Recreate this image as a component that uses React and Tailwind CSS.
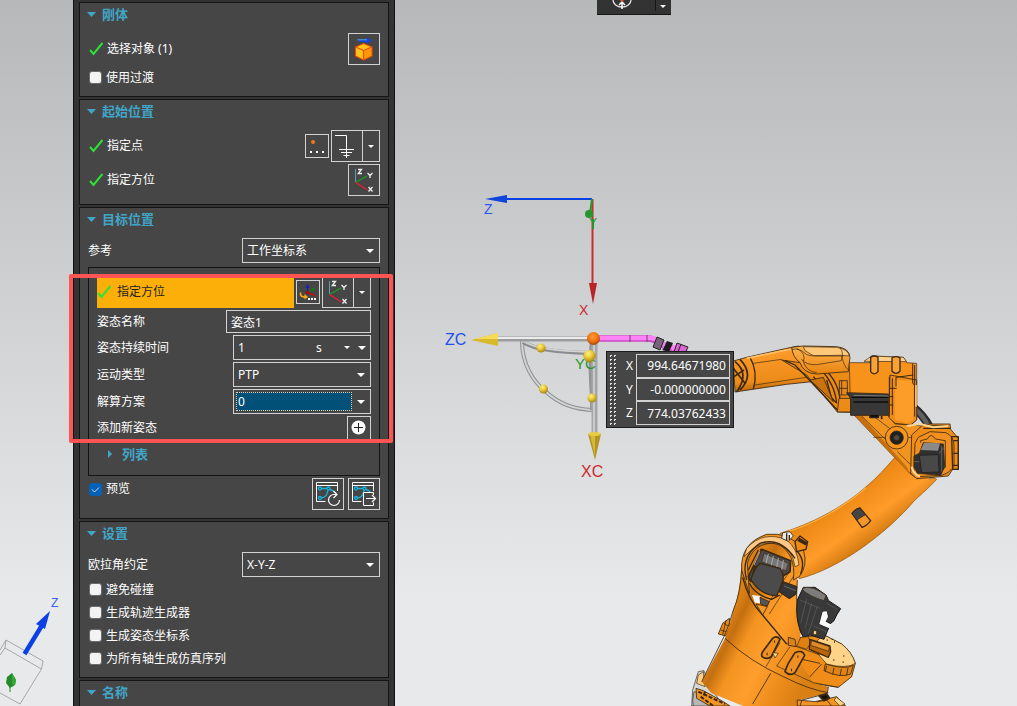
import { useState } from 'react'
import { clsx } from 'clsx'

function Caret({ className }) {
  return (
    <svg viewBox="0 0 8 4" className={clsx('pointer-events-none h-1 w-2 shrink-0', className)} aria-hidden="true">
      <path d="M0 0H8L4 4Z" fill="#fff" />
    </svg>
  )
}

function CheckMark() {
  return (
    <svg viewBox="0 0 14 14" className="h-3.5 w-3.5 shrink-0" aria-hidden="true">
      <path d="M1 8 4.500 12 13.500 1" fill="none" stroke="#2ee236" strokeWidth="2" />
    </svg>
  )
}

function IconButton({ label, size = 'size-8', children }) {
  return (
    <button type="button" aria-label={label} className={clsx('shrink-0 border border-[#d2d2d2] hover:bg-[#555]', size)}>
      {children}
    </button>
  )
}

function SplitButton({ label, children }) {
  return (
    <div className="flex h-8 shrink-0 border border-[#d2d2d2]">
      <button type="button" aria-label={label} className="w-[30px]">{children}</button>
      <button type="button" aria-label={`${label} 选项`} className="flex w-[17px] items-center justify-center border-l border-[#d2d2d2]">
        <svg viewBox="0 0 6 3" className="h-[3px] w-1.5" aria-hidden="true"><path d="M0 0H6L3 3Z" fill="#fff" /></svg>
      </button>
    </div>
  )
}

function BodyIcon() {
  return (
    <svg viewBox="1 1 30 30" className="size-[30px]">
      <path d="M9.500 6.500H18.500V4.500L24 7.500 18.500 10.500V9H12Z" fill="#1546dc" />
      <path d="M9.500 6.800H19" stroke="#4fa5f0" strokeWidth="1" />
      <path d="M15.500 10.500 24 14V23L15.500 27 7.500 23V14Z" fill="#ffc414" />
      <path d="M15.500 17.500 24 14V23L15.500 27Z" fill="#ff9808" />
      <path d="M15.500 10.500 24 14V23L15.500 27 7.500 23V14ZM7.500 14 15.500 17.500 24 14M15.500 17.500V27" fill="none" stroke="#f04a0c" strokeWidth="1.100" />
    </svg>
  )
}

function PointIcon() {
  return (
    <svg viewBox="1 1 22 22" className="size-[22px]">
      <circle cx="8" cy="8" r="2" fill="#f07a18" />
      <path d="M5 17h2v2H5zM11 17h2v2h-2zM17 17h2v2h-2z" fill="#fff" />
    </svg>
  )
}

function GroundIcon() {
  return (
    <svg viewBox="1 1 30 30" className="size-[30px]">
      <path d="M4 5.500H15.500V28M8 19.500H23M10 22.500H21M12.500 25.500H18.500" fill="none" stroke="#fff" />
    </svg>
  )
}

function CsysIcon() {
  return (
    <svg viewBox="1 1 30 30" className="size-[30px]">
      <path d="M7.500 5V18" stroke="#5c9db8" />
      <path d="M7.500 18.500 19 12" stroke="#16a01c" strokeWidth="1.300" />
      <path d="M7.500 18.500 19.500 26" stroke="#e8202c" strokeWidth="1.300" />
      <g fill="none" stroke="#eee" strokeWidth="1.300">
        <path d="M10 5.500H13.500L10.300 9.500H14" />
        <path d="M19.500 9 22 11.500 24.500 9M22 11.500V14" />
        <path d="M20.500 23 24.500 27.500M24.500 23 20.500 27.500" />
      </g>
    </svg>
  )
}

function OrientIcon() {
  return (
    <svg viewBox="1 1 22 22" className="size-[22px]">
      <path d="M11.500 12V6" stroke="#1226b8" strokeWidth="1.200" />
      <path d="M9.500 8 11.500 4 13.500 8Z" fill="#1226b8" />
      <path d="M11.500 12 17 9.500" stroke="#0e7a1c" strokeWidth="1.200" />
      <path d="M15.500 8 20 8.500 17 11.500Z" fill="#0e7a1c" />
      <path d="M11.500 12.500 19 15.500" stroke="#c01010" strokeWidth="1.500" />
      <circle cx="11.500" cy="12.500" r="1.800" fill="#a80c0c" />
      <path d="M4.500 12.500C4 16 6 17 9 17" fill="none" stroke="#ffac14" strokeWidth="1.600" />
      <path d="M8.500 14 12 17 8.500 19.500Z" fill="#ffac14" />
      <path d="M12 18h2v2h-2zM15 18h2v2h-2zM18 18h2v2h-2z" fill="#fff" />
    </svg>
  )
}

function PathWindow() {
  return (
    <>
      <path d="M13.500 23.500H4.500V4.500H25.500V13M4.500 7.500H25.500" fill="none" stroke="#fff" />
      <g fill="none" stroke="#18b4e0" strokeWidth="1.300">
        <path d="M9.500 10.500H15M18 11.500C21 12 22 13.500 23 15M16 12C15.500 17 13 19.500 9.500 20" />
        <circle cx="8" cy="10.500" r="1.500" />
        <circle cx="16.500" cy="10.500" r="1.500" />
        <circle cx="8" cy="20" r="1.500" />
      </g>
    </>
  )
}

function ReplayIcon() {
  return (
    <svg viewBox="1 1 30 30" className="size-[30px]">
      <PathWindow />
      <path d="M25 16.500H22A5.500 5.500 0 1 0 27.500 22M21.500 13 25 16.500 21.500 20" fill="none" stroke="#fff" strokeWidth="1.200" />
    </svg>
  )
}

function ExportIcon() {
  return (
    <svg viewBox="1 1 30 30" className="size-[30px]">
      <PathWindow />
      <path d="M25.500 17V14.500H15.500V27.500H25.500V24.500" fill="#464646" stroke="#fff" />
      <path d="M18 20.500H27.500M24 17 27.500 20.500 24 24" fill="none" stroke="#fff" strokeWidth="1.200" />
    </svg>
  )
}

function Section({ title, children }) {
  return (
    <section className="border border-[#141414] bg-[#464646] px-2">
      <h2>
        <button type="button" aria-expanded="true" className="-ml-px flex h-[22px] items-center gap-1.5 text-[13px] font-bold text-[#41a5c8]">
          <svg viewBox="0 0 9 5" className="h-[5px] w-[9px]" aria-hidden="true"><path d="M0 0H9L4.500 5Z" fill="#41a5c8" /></svg>
          {title}
        </button>
      </h2>
      {children}
    </section>
  )
}

function Tick({ label, defaultChecked = false, className }) {
  const [checked, setChecked] = useState(defaultChecked)
  return (
    <label className={clsx('flex items-center gap-1 pl-0.5', className)}>
      <span className="-ml-px grid size-[13px] shrink-0">
        <input
          type="checkbox"
          checked={checked}
          onChange={(e) => setChecked(e.target.checked)}
          className="col-start-1 row-start-1 size-[13px] appearance-none rounded-[3px] border border-[#6b6b6b] bg-[#f3f3f3] checked:border-[#0560b8] checked:bg-[#0560b8]"
        />
        {checked && (
          <svg viewBox="0 0 13 13" className="pointer-events-none col-start-1 row-start-1 size-[13px]" aria-hidden="true">
            <path d="M3 6.500 5.500 9 10 4.500" fill="none" stroke="#cfe4f8" />
          </svg>
        )}
      </span>
      {label}
    </label>
  )
}

function SelectField({ id, value, options = [value] }) {
  return (
    <div className="grid h-[25px] w-[138px] shrink-0 items-center border border-[#d2d2d2]">
      <select id={id} defaultValue={value} className="col-start-1 row-start-1 h-full w-full appearance-none bg-transparent pl-1 outline-none">
        {options.map((o) => <option key={o} className="bg-[#464646]">{o}</option>)}
      </select>
      <Caret className="col-start-1 row-start-1 mr-[5px] justify-self-end" />
    </div>
  )
}

function Row({ label, htmlFor, children }) {
  return (
    <div className="flex items-center justify-between">
      <label htmlFor={htmlFor}>{label}</label>
      {children}
    </div>
  )
}

function Done({ children }) {
  return (
    <span className="flex items-center gap-1 pl-px">
      <CheckMark />
      {children}
    </span>
  )
}

function PoseBox() {
  return (
    <div className="mt-1 border border-[#141414] px-2 pt-2 pb-[7px]">
      <div className="flex flex-col gap-0.5">
        <div className="flex items-center">
          <span className="mr-0.5 flex h-8 flex-1 items-center gap-1.5 bg-[#fcaf08] text-[#222]">
            <CheckMark />
            指定方位
          </span>
          <IconButton label="坐标系对话框" size="size-6"><OrientIcon /></IconButton>
          <div className="ml-0.5"><SplitButton label="坐标系"><CsysIcon /></SplitButton></div>
        </div>
        <Row label="姿态名称" htmlFor="pose-name">
          <input id="pose-name" defaultValue="姿态1" className="h-[23px] w-[145px] border border-[#d2d2d2] px-1 outline-none" />
        </Row>
        <Row label="姿态持续时间" htmlFor="pose-time">
          <div className="flex h-[25px] w-[138px] items-center border border-[#d2d2d2]">
            <input id="pose-time" defaultValue="1" className="w-0 flex-1 px-1 outline-none" />
            <select aria-label="单位" className="w-6 appearance-none bg-transparent outline-none">
              <option className="bg-[#464646]">s</option>
            </select>
            <svg viewBox="0 0 6 3" className="ml-1 h-[3px] w-1.5" aria-hidden="true"><path d="M0 0H6L3 3Z" fill="#fff" /></svg>
            <button type="button" aria-label="持续时间选项" className="ml-2 pr-1"><Caret /></button>
          </div>
        </Row>
        <Row label="运动类型" htmlFor="motion-type">
          <SelectField id="motion-type" value="PTP" options={['PTP', 'LIN']} />
        </Row>
        <Row label="解算方案" htmlFor="solution">
          <div className="flex h-[25px] w-[138px] items-center border border-[#d2d2d2] pl-0.5">
            <input id="solution" defaultValue="0" className="h-[19px] w-0 flex-1 border border-dotted border-[#f0c8a0] bg-[#005078] px-px outline-none" />
            <button type="button" aria-label="解算方案选项" className="px-[5px]"><Caret /></button>
          </div>
        </Row>
        <div className="flex items-center justify-between">
          添加新姿态
          <IconButton label="添加新姿态" size="size-6">
            <svg viewBox="0 0 22 22" className="size-[22px]">
              <circle cx="10.500" cy="10.500" r="7" fill="#fff" />
              <path d="M10.500 6V15M6 10.500H15" stroke="#222" />
            </svg>
          </IconButton>
        </div>
      </div>
      <button type="button" aria-expanded="false" className="flex h-7 items-center gap-2 pl-2.5 text-[13px] font-bold text-[#41a5c8]">
        <svg viewBox="0 0 7 8" className="h-2 w-[7px]" aria-hidden="true"><path d="M1 0 5 4 1 8Z" fill="#41a5c8" /></svg>
        列表
      </button>
    </div>
  )
}

function Panel() {
  return (
    <aside className="relative flex w-[322px] shrink-0 flex-col gap-0.5 border-x border-[#111] bg-[#333] px-[5px] pt-0.5">
      <Section title="刚体">
        <div className="mt-2 flex items-center justify-between">
          <Done>选择对象 (1)</Done>
          <IconButton label="选择对象"><BodyIcon /></IconButton>
        </div>
        <Tick label="使用过渡" className="mt-px mb-[7px] h-[23px]" />
      </Section>

      <Section title="起始位置">
        <div className="mt-2 flex items-center">
          <Done>指定点</Done>
          <div className="ml-auto flex items-center gap-0.5">
            <IconButton label="点对话框" size="size-6"><PointIcon /></IconButton>
            <SplitButton label="推断点"><GroundIcon /></SplitButton>
          </div>
        </div>
        <div className="mt-0.5 mb-2 flex items-center justify-between">
          <Done>指定方位</Done>
          <IconButton label="指定方位"><CsysIcon /></IconButton>
        </div>
      </Section>

      <Section title="目标位置">
        <div className="mt-2">
          <Row label="参考" htmlFor="reference"><SelectField id="reference" value="工作坐标系" /></Row>
        </div>
        <PoseBox />
        <div className="mt-0.5 mb-2 flex items-start gap-1">
          <Tick label="预览" defaultChecked className="mr-auto h-[22px]" />
          <IconButton label="重播"><ReplayIcon /></IconButton>
          <IconButton label="导出"><ExportIcon /></IconButton>
        </div>
      </Section>

      <Section title="设置">
        <div className="mt-2 mb-px">
          <Row label="欧拉角约定" htmlFor="euler"><SelectField id="euler" value="X-Y-Z" /></Row>
        </div>
        <div className="mb-[7px]">
          <Tick label="避免碰撞" className="h-[23px]" />
          <Tick label="生成轨迹生成器" className="h-[23px]" />
          <Tick label="生成姿态坐标系" className="h-[23px]" />
          <Tick label="为所有轴生成仿真序列" className="h-[23px]" />
        </div>
      </Section>

      <Section title="名称">
        <div className="h-10" />
      </Section>

      {/* callout frame around the pose fields */}
      <div className="pointer-events-none absolute top-[274px] -left-[5px] h-[169px] w-[324px] rounded-xs border-4 border-[#ff5454]" />
    </aside>
  )
}

// Small view triad in the bottom left corner
function ViewTriad() {
  return (
    <svg viewBox="0 590 73 116" className="h-[116px] w-[73px]" aria-label="视图方向">
      <path d="M0 650 6 640 43 661 41.500 669 20 704 0 693M6 640 5 648 41.500 669M5 648 0 655" fill="none" stroke="#a5a7a9" />
      <path d="M24.500 654 44 622" stroke="#0b41e4" strokeWidth="4.500" />
      <path d="M36 624 50 611 45 629Z" fill="#0b41e4" />
      <path d="M12 673 16 680 15 685 10 688 6 683 7 677Z" fill="#238c28" />
      <path d="M12 673V684L15 685 16 680Z" fill="#35a83a" />
      <path d="M10 686V692" stroke="#238c28" />
      <text x="51" y="607" fontSize="12" fontFamily="Liberation Sans" fill="#3560f0">Z</text>
    </svg>
  )
}

function AxisFrames() {
  return (
    <g fontFamily="Liberation Sans">
      {/* absolute frame */}
      <path d="M592 199H502" stroke="#0b41e4" strokeWidth="2" />
      <path d="M485 199 507 195V203Z" fill="#1045dc" />
      <path d="M592.500 199V285" stroke="#cb2b2e" strokeWidth="2" />
      <path d="M589 283H597L593 304Z" fill="#b82428" />
      <path d="M592 199 590 214M593 219V229" stroke="#24962c" strokeWidth="2" />
      <circle cx="589" cy="214" r="4" fill="#24962c" />
      <text x="484" y="214" fontSize="14" fill="#2855f5">Z</text>
      <text x="589" y="227" fontSize="12" fill="#24962c">Y</text>
      <text x="579" y="315" fontSize="14" fill="#cf2a30">X</text>

      {/* working frame with rotation handles */}
      <path d="M522 341C522 365 534 382 545 391C560 405 575 409 592 410" fill="none" stroke="#8d8f91" strokeWidth="4" />
      <path d="M522 341C522 365 534 382 545 391C560 405 575 409 592 410" fill="none" stroke="#d2d3d4" strokeWidth="2" />
      <path d="M523 342C535 350 560 352 588 353" fill="none" stroke="#898b8d" strokeWidth="4" />
      <path d="M523 341C535 349 560 351 588 352" fill="none" stroke="#d2d3d4" strokeWidth="2" />
      <path d="M592 341C588 370 593 390 592 410" fill="none" stroke="#939597" strokeWidth="4" />
      <path d="M497 339H588" stroke="#9a9b9c" strokeWidth="5" />
      <path d="M497 338H588" stroke="#ececec" strokeWidth="2" />
      <path d="M594.500 343V435" stroke="#a5a6a7" strokeWidth="6" />
      <path d="M594 343V435" stroke="#c9cacb" strokeWidth="2" />
      <path d="M471 340 498 333V346Z" fill="#d9b92c" />
      <path d="M475 339 498 333V339Z" fill="#f6dc5a" />
      <path d="M588 434H601L595 460Z" fill="#b39525" />
      <path d="M590 434H595V456Z" fill="#d5b83c" />
      <ellipse cx="594.500" cy="434" rx="6.500" ry="2" fill="#e8cc45" />
      <text x="575" y="369" fontSize="15" fill="#24962c">YC</text>
      <path d="M583 355 590 364 596 355Z" fill="#a98c20" />
      <circle cx="589.500" cy="356" r="6" fill="url(#yellowBall)" />
      <circle cx="541" cy="348" r="4.500" fill="url(#yellowBall)" />
      <circle cx="543.500" cy="389" r="4.500" fill="url(#yellowBall)" />
      <circle cx="592" cy="398" r="4.500" fill="url(#yellowBall)" />
      <text x="445" y="345" fontSize="16" fill="#2050f0">ZC</text>
      <text x="581" y="477" fontSize="16" fill="#cf2a30">XC</text>

      {/* torch */}
      <path d="M597 338.500H645C655 338 658 342 665 346L687 354" fill="none" stroke="#c849c4" strokeWidth="6.500" />
      <path d="M597 338H645C655 337 659 341 665 345L687 352" fill="none" stroke="#ff84f8" strokeWidth="4.500" />
      <path d="M630 335V342M647 335V342" stroke="#7a3a78" />
      <path d="M657 337 664 340 660 350 653 347Z" fill="#76647a" stroke="#222" />
      <path d="M667 341 673 343 669 352 662 350Z" fill="#1c1c1c" />
      <path d="M665 344 662 350M675 345 671 353" stroke="#ff84f8" />
      <path d="M677 343 688 347 684 355 674 352ZM681 344 678 352" fill="#d865d2" stroke="#222" />
      <circle cx="593.500" cy="338.500" r="6.500" fill="url(#orangeBall)" />
    </g>
  )
}

function UpperArm() {
  return (
    <g transform="translate(640 320) scale(.33333)" stroke="#3a2812" strokeWidth="2.500" strokeLinejoin="round">
      {/* hose behind the elbow */}
      <path d="M820 262 Q850 285 868 320" fill="none" stroke="#2b2b2b" strokeWidth="26" />
      <path d="M822 265 Q848 285 864 316" fill="none" stroke="#606060" strokeWidth="14" />

      {/* elbow plate */}
      <path d="M640 283 810 460 832 476 870 420 860 320 820 315 750 280Z" fill="#f29420" />
      <path d="M640 283 812 464 800 440 665 288Z" fill="#c66f0c" stroke="none" />
      <path d="M665 288 740 362M772 395 812 434M705 292 755 330M740 352H700M805 352 830 355" fill="none" strokeWidth="2" />
      <circle cx="770" cy="353" r="34" fill="#f7961f" />
      <circle cx="770" cy="353" r="20" fill="#1f1f1f" />
      <circle cx="770" cy="353" r="9" fill="#4a4a4a" />

      {/* elbow motor housing */}
      <path d="M845 318 870 312 930 312 932 328 955 355V448H938L925 468 830 476 812 460 815 345Z" fill="#f08c18" />
      <path d="M835 352 870 335 918 338Q943 350 942 380V440Q925 462 905 466L835 470 822 455 825 370Z" fill="#f28f1e" />
      <path d="M935 350H955V448H938ZM940 362H954M940 400H954M940 436H954M850 325H932M870 318H925" fill="none" strokeWidth="4" />
      <path d="M842 368V362L862 357Q873 336 886 357L916 362V442L905 448" fill="#ef9020" />
      <path d="M850 368 910 372 914 440 902 466 832 460 822 440V408L838 400Z" fill="#303030" />
      <path d="M852 368 900 370 894 392 842 390Z" fill="#8a8a8a" stroke="none" />
      <path d="M838 406 895 404 897 456 845 458Z" fill="#484848" stroke="#202020" />
      <path d="M905 378V455M898 400 912 382M822 425H838M865 466V476H882" stroke="#777" strokeWidth="2" fill="none" />
      <path d="M815 440Q820 462 840 470" stroke="#ffd79c" strokeWidth="6" fill="none" />

      {/* forearm tube */}
      <path d="M280 123 320 112 440 85 475 78 510 100 515 185 440 193 345 207 285 216Z" fill="url(#forearm)" />
      <path d="M285 125Q330 160 290 216M300 118Q345 165 300 210M280 145 315 190M282 170 312 150" fill="none" strokeWidth="5" />
      <path d="M330 112Q355 155 340 207" fill="none" strokeWidth="4" />
      <path d="M340 130 425 118M345 195 500 172" fill="none" strokeWidth="2" />
      <path d="M320 115 440 90 474 85" fill="none" stroke="#ffc06a" strokeWidth="5" />

      {/* fork joining forearm and wrist body */}
      <path d="M425 120 500 165 592 276 640 277 650 140 560 140Z" fill="#ec8a16" />
      <path d="M435 122 465 135 510 182 592 270M520 170 588 248M535 140Q585 190 590 250M550 145Q600 185 602 260M560 180 575 235" fill="none" strokeWidth="4" />
      <path d="M510 180 550 172 580 245Z" fill="#c9720e" />
      <path d="M455 82 490 78 590 80Q628 84 630 112L625 155 530 162Q490 160 480 128Q458 112 455 82Z" fill="url(#cap)" />
      <path d="M490 80 590 82Q625 88 628 108L605 106 520 107 495 92Z" fill="#ffc77a" strokeWidth="2" />
      <path d="M455 88Q480 84 495 100Q502 108 530 108H610M470 85Q500 100 490 125Q500 155 530 158M600 84Q612 96 604 122L530 134Q500 136 484 118M605 108Q612 140 625 150" fill="none" strokeWidth="2" />
      <path d="M598 182H622V225H598ZM605 182V225M598 205H622" fill="#e58a20" />

      {/* wrist body */}
      <path d="M628 128 690 128 695 108 790 112 800 128 830 130V300L812 315 765 312 745 285 632 285Z" fill="#f7931b" strokeWidth="2" />
      <path d="M672 124 695 108 790 112 800 125Z" fill="#ffd08a" strokeWidth="2" />
      <path d="M692 112Q703 104 714 112V155Q702 168 692 155ZM756 114Q768 106 780 114V154Q768 166 756 154Z" fill="#f9a236" strokeWidth="4" />
      <path d="M597 235 632 235V276H592Z" fill="#ed8b17" />
      <path d="M620 218 745 222V286H632V236Z" fill="#383838" />
      <path d="M635 232H745M640 246H745" stroke="#0c0c0c" strokeWidth="4" />
      <path d="M640 226 745 228" stroke="#777" strokeWidth="3" />
      <path d="M690 286V292H715V286M725 288V298" stroke="#222" strokeWidth="5" />
      <path d="M750 165 830 180V300L812 315 765 310 746 292Z" fill="#f08c16" />
      <path d="M765 180 820 182V300L800 310 765 300Z" fill="#fb9d28" stroke="none" />
      <path d="M748 170V290M757 175V285M768 172V200M748 205H770M748 230H760M748 255H760M818 130V190L830 200M824 135V290M768 172 820 165" fill="none" strokeWidth="3" />
      <path d="M828 195V260" stroke="#ffc470" strokeWidth="5" />
      <path d="M800 318 840 312 880 322 925 318" fill="none" stroke="#ffd590" strokeWidth="6" />
    </g>
  )
}

function LowerArm() {
  return (
    <g transform="translate(680 500) scale(.33333)" stroke="#3a2812" strokeWidth="2.500" strokeLinejoin="round">
      {/* main link */}
      <path d="M300 100C400 70 490 20 555 -37C590 -65 620 -100 645 -128L770 -62C745 -35 725 -18 705 0C620 100 480 205 358 236L335 150Z" fill="url(#link)" stroke="#8f5008" strokeWidth="2" />
      <path d="M325 94C400 72 490 22 557 -35" fill="none" stroke="#ffb040" strokeWidth="4" />
      <path d="M516 40Q526 26 540 24L572 62Q560 78 546 82Z" fill="#f5962a" strokeWidth="4" />
      <path d="M516 40Q526 26 540 24L556 44 530 60Z" fill="#454545" />

      {/* base rear details */}
      <path d="M148 355 128 370 115 402 138 408 150 380Z" fill="#ed8b17" />
      <path d="M132 370 145 378M122 390 138 395M138 362 128 404" fill="none" />
      <path d="M35 618 38 570 55 515 72 512 90 560 130 618Z" fill="#d5d7d9" strokeWidth="2" />
      <path d="M42 575 62 580 100 600 140 618H40L38 600Z" fill="#b5b8ba" strokeWidth="2" />
      <path d="M55 525 70 515 75 560 50 550Z" fill="#ffcf88" strokeWidth="2" />

      {/* turntable */}
      <path d="M430 404 485 432Q515 455 526 490L515 530 475 562 400 550 290 500 300 420Z" fill="#ef8d18" />
      <path d="M430 404 485 432Q515 455 526 490Q500 508 440 492L395 440Z" fill="#ffd489" strokeWidth="2" />
      <path d="M436 492Q495 510 520 496L512 522Q480 535 432 512ZM440 498 436 514M462 504 458 524M484 507 480 528M504 504 500 526" fill="#df8418" />
      <path d="M425 492 385 535M330 470 420 490" fill="none" />
      <path d="M490 468h3M488 486h3M460 480h3M440 420h3M455 418h3M462 426h3" strokeWidth="4" />

      {/* column */}
      <path d="M185 190Q180 280 160 330Q145 400 130 425L65 545 95 580 190 618H360V600L440 580 445 560 400 548 350 470 362 400Q345 330 352 240L340 150 270 110 210 140Z" fill="url(#column)" stroke="none" />
      <path d="M185 205Q182 280 160 330Q148 375 132 410L65 545M352 240Q345 330 362 398L380 420M135 415Q210 485 310 530Q390 570 445 578M445 560 442 580 360 602M272 520 218 612" fill="none" />
      <path d="M345 222 268 342M332 210 250 330M300 428 258 500M330 440 290 498 400 548 475 562M318 430 350 440 420 465" fill="none" strokeWidth="2" />
      <path d="M188 232Q205 300 245 342L320 432" fill="none" strokeWidth="4" />
      <path d="M278 415Q290 405 300 418L274 470Q262 480 246 470Q243 462 248 455ZM345 458Q368 448 374 466L345 518Q330 530 315 515Q318 505 325 490Z" fill="#ef9020" strokeWidth="5" />
      <path d="M282 425h3M260 462h3M352 470h3M333 510h3" strokeWidth="7" />
      <path d="M278 458 295 460 285 474Z" fill="#ffd489" strokeWidth="2" />

      {/* shoulder ring */}
      <path d="M185 210Q180 130 260 103Q330 95 370 150Q385 195 358 230L340 240Q350 160 290 130Q220 125 202 190L208 280Z" fill="#f29420" />
      <path d="M200 145Q250 90 320 120Q352 145 357 195L345 200Q338 150 300 135Q245 112 192 170Z" fill="#ffc985" strokeWidth="2" />
      <path d="M200 240Q180 170 240 130Q300 110 345 175M208 250Q225 285 275 298L300 285M350 152Q378 180 362 222M240 148 330 185M205 210 235 150" fill="none" strokeWidth="4" />
      <path d="M308 98 330 95 340 108 325 124 305 115Z" fill="#e9e9e9" />
      <path d="M320 100V122M328 105V120" strokeWidth="4" />
      <path d="M345 125 360 108 383 125 378 148 350 155Z" fill="#ee8b18" strokeWidth="4" />
      <path d="M355 118 380 132" strokeWidth="11" />

      {/* shoulder motor */}
      <path d="M245 148 332 182 330 215 305 230 225 200 212 245 205 230Z" fill="#4a4a4a" strokeWidth="5" />
      <path d="M252 160 325 190 318 212 245 185Z" fill="#777" strokeWidth="2" />
      <path d="M265 162 258 190M280 168 274 196M295 174 290 202M310 180 305 210M222 195 240 155" stroke="#aaa" strokeWidth="3" />
      <path d="M240 190 300 205Q315 225 307 248L290 288Q240 285 213 240Q215 225 232 198Z" fill="#4b4b4b" strokeWidth="4" />
      <path d="M308 245 350 260 348 282 328 295 298 275Z" fill="#363636" strokeWidth="4" />
      <path d="M312 258 348 272" stroke="#707070" />
      <path d="M216 285 240 288 242 310 225 308Z" fill="#f5f5f5" stroke="none" />
      <path d="M240 292 268 305 262 318 242 312Z" fill="#555" />
      <path d="M228 312 262 320 248 345Z" fill="#f39a24" />

      {/* base motor and connector */}
      <path d="M352 300 370 262 405 262 438 285 446 302 482 326 470 345 462 362 450 372 437 365 444 348 440 334 428 334 424 350 418 372 446 384 432 418 390 405 370 412Q350 375 350 330Z" fill="#393939" stroke="#191919" strokeWidth="3" />
      <path d="M428 335 440 334 444 350 437 365 455 374 446 384 418 372Z" fill="#fafafa" stroke="none" />
      <path d="M370 264Q395 255 438 286L432 302Q390 290 368 270Z" fill="#7c7c7c" strokeWidth="2" />
      <path d="M360 300 420 325M380 295 362 370M395 310 375 385M412 318 385 400M440 310 472 328M400 378 440 395" fill="none" stroke="#606060" strokeWidth="2" />
      <path d="M362 412 385 410 392 430 380 448 350 438Z" fill="#e08010" strokeWidth="2" />
      <path d="M390 418 450 438 452 455 445 472 388 448Z" fill="#b8650a" strokeWidth="4" />
      <path d="M395 422 448 440 446 454 392 436Z" fill="#e08a28" strokeWidth="2" />
      <path d="M325 412 345 418 348 440 325 436Z" fill="#dc8218" />
      <path d="M400 392h10v12h-10z" fill="#ffd489" />

      {/* lower skirt */}
      <path d="M352 600 405 605 470 590 497 618H352Z" fill="#f29422" />
      <path d="M470 592 495 612 480 618 462 600Z" fill="#ffd489" strokeWidth="2" />
      <path d="M410 606 440 600 455 618M365 602 360 618" fill="none" />
      <path d="M418 588 440 582 448 594 432 602Z" fill="#111" strokeWidth="6" />
      <path d="M48 565 70 572 130 605 150 618H90L50 595Z" fill="#f29422" />
      <path d="M55 575 135 612M62 590 100 618M75 575 70 590" fill="none" strokeWidth="6" strokeDasharray="12 5" />
    </g>
  )
}

function Scene() {
  return (
    <svg viewBox="395 0 622 706" preserveAspectRatio="xMinYMin meet" className="h-[706px] w-full" aria-label="机器人模型">
      <defs>
        <radialGradient id="yellowBall" cx=".4" cy=".3" r=".7">
          <stop offset="0" stopColor="#fff08a" />
          <stop offset=".5" stopColor="#e8c832" />
          <stop offset="1" stopColor="#a5861a" />
        </radialGradient>
        <radialGradient id="orangeBall" cx=".45" cy=".35" r=".65">
          <stop offset="0" stopColor="#ff9c38" />
          <stop offset=".6" stopColor="#ef720c" />
          <stop offset="1" stopColor="#9c4806" />
        </radialGradient>
        <linearGradient id="link" gradientUnits="userSpaceOnUse" x1="440" y1="20" x2="540" y2="160">
          <stop offset="0" stopColor="#e98612" />
          <stop offset=".25" stopColor="#f48f1c" />
          <stop offset=".6" stopColor="#ff9c2a" />
          <stop offset="1" stopColor="#cf760e" />
        </linearGradient>
        <linearGradient id="forearm" x1="0" y1="0" x2=".1" y2="1">
          <stop offset="0" stopColor="#ff9f30" />
          <stop offset=".8" stopColor="#ed8b18" />
          <stop offset="1" stopColor="#b8650a" />
        </linearGradient>
        <linearGradient id="cap" x1="0" y1="0" x2="0" y2="1">
          <stop offset="0" stopColor="#ffb450" />
          <stop offset="1" stopColor="#e88410" />
        </linearGradient>
        <linearGradient id="column" gradientUnits="userSpaceOnUse" x1="110" y1="430" x2="370" y2="560">
          <stop offset="0" stopColor="#dc7f14" />
          <stop offset=".1" stopColor="#c47010" />
          <stop offset=".25" stopColor="#f39320" />
          <stop offset=".5" stopColor="#ff9e2c" />
          <stop offset=".8" stopColor="#ea8a1a" />
          <stop offset="1" stopColor="#d98014" />
        </linearGradient>
      </defs>
      <LowerArm />
      <UpperArm />
      <AxisFrames />
    </svg>
  )
}

function CoordinateBox() {
  const fields = [
    ['X', '994.64671980'],
    ['Y', '-0.000000000'],
    ['Z', '774.03762433'],
  ]
  return (
    <div className="absolute top-[351px] left-[211px] flex h-[77px] w-32 border border-[#1c1c1c] bg-[#464646] p-0.5 pr-[3px]">
      <svg className="mr-2.5 h-full w-2 shrink-0" aria-hidden="true">
        <defs>
          <pattern id="grip" width="4" height="4" patternUnits="userSpaceOnUse">
            <path d="M1 1h2v1h-1v1h-1z" fill="#e5e5e5" />
          </pattern>
        </defs>
        <rect width="8" height="100%" fill="url(#grip)" />
      </svg>
      <div className="flex flex-1 flex-col">
        {fields.map(([axis, value]) => (
          <label key={axis} className="flex flex-1 items-center">
            <span className="-ml-px w-2.5">{axis}</span>
            <input defaultValue={value} className="h-full w-0 flex-1 border border-[#d2d2d2] pr-[3px] text-right outline-none" />
          </label>
        ))}
      </div>
    </div>
  )
}

function ViewToolbar() {
  return (
    <div className="absolute top-0 left-[202px] flex h-[15px] w-[74px] border-b border-[#161616] bg-[#333]">
      <button type="button" aria-label="定向视图" className="flex w-[58px] justify-center pr-2">
        <svg viewBox="0 0 20 10" className="h-2.5 w-5">
          <path d="M1 0A9 7 0 0 0 19 0" fill="none" stroke="#e5e5e5" strokeWidth="1.300" />
          <path d="M10 2V9M7 5 10 2 13 5" fill="none" stroke="#fff" strokeWidth="1.500" />
          <path d="M8.500 0H11.500V1.500H8.500Z" fill="#e0562c" />
        </svg>
      </button>
      <button type="button" aria-label="定向视图选项" className="flex h-[11px] flex-1 items-center border-l border-[#161616] pt-px pl-1">
        <svg viewBox="0 0 6 3" className="h-[3px] w-1.5"><path d="M0 0H6L3 3Z" fill="#fff" /></svg>
      </button>
    </div>
  )
}

export default function App() {
  return (
    <main className="flex h-screen overflow-hidden bg-linear-to-b from-[#b7b8ba] via-[#d4d5d7] via-50% to-[#e7e9ea] to-85% font-['Noto_Sans','Noto_Sans_CJK_SC',sans-serif] text-xs leading-4 text-white">
      <div className="flex w-[73px] shrink-0 items-end">
        <ViewTriad />
      </div>
      <Panel />
      <div className="relative min-w-0 flex-1">
        <Scene />
        <ViewToolbar />
        <CoordinateBox />
      </div>
    </main>
  )
}
